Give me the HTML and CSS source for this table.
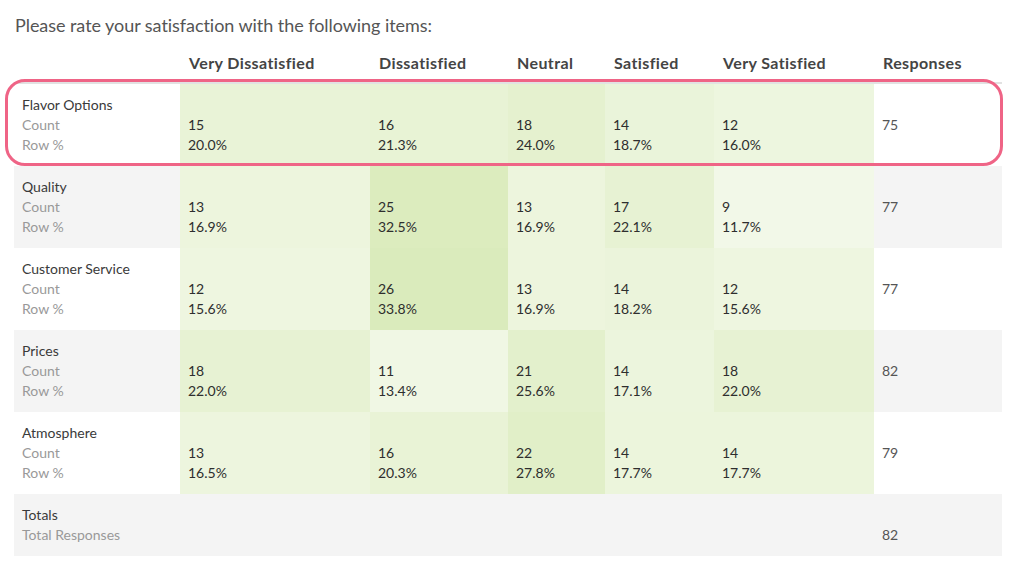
FILE: index.html
```html
<!DOCTYPE html>
<html lang="en">
<head>
<meta charset="utf-8">
<title>Satisfaction</title>
<link rel="stylesheet" href="styles.css">
</head>
<body>
<div class="page">
  <p class="question">Please rate your satisfaction with the following items:</p>
  <div class="table-wrap">
    <table class="grid">
      <colgroup>
        <col class="c-label"><col class="c-vd"><col class="c-d"><col class="c-n"><col class="c-s"><col class="c-vs"><col class="c-r">
      </colgroup>
      <thead>
        <tr>
          <th></th><th>Very Dissatisfied</th><th>Dissatisfied</th><th>Neutral</th><th>Satisfied</th><th>Very Satisfied</th><th>Responses</th>
        </tr>
      </thead>
      <tbody>
        <tr>
          <td class="label"><span class="name">Flavor Options</span><span class="sub">Count</span><span class="sub">Row %</span></td>
          <td class="val" style="--a:.200"><span>15</span><span>20.0%</span></td>
          <td class="val" style="--a:.213"><span>16</span><span>21.3%</span></td>
          <td class="val" style="--a:.240"><span>18</span><span>24.0%</span></td>
          <td class="val" style="--a:.187"><span>14</span><span>18.7%</span></td>
          <td class="val" style="--a:.160"><span>12</span><span>16.0%</span></td>
          <td class="resp">75</td>
        </tr>
        <tr class="alt">
          <td class="label"><span class="name">Quality</span><span class="sub">Count</span><span class="sub">Row %</span></td>
          <td class="val" style="--a:.169"><span>13</span><span>16.9%</span></td>
          <td class="val" style="--a:.325"><span>25</span><span>32.5%</span></td>
          <td class="val" style="--a:.169"><span>13</span><span>16.9%</span></td>
          <td class="val" style="--a:.221"><span>17</span><span>22.1%</span></td>
          <td class="val" style="--a:.117"><span>9</span><span>11.7%</span></td>
          <td class="resp">77</td>
        </tr>
        <tr>
          <td class="label"><span class="name">Customer Service</span><span class="sub">Count</span><span class="sub">Row %</span></td>
          <td class="val" style="--a:.156"><span>12</span><span>15.6%</span></td>
          <td class="val" style="--a:.338"><span>26</span><span>33.8%</span></td>
          <td class="val" style="--a:.169"><span>13</span><span>16.9%</span></td>
          <td class="val" style="--a:.182"><span>14</span><span>18.2%</span></td>
          <td class="val" style="--a:.156"><span>12</span><span>15.6%</span></td>
          <td class="resp">77</td>
        </tr>
        <tr class="alt">
          <td class="label"><span class="name">Prices</span><span class="sub">Count</span><span class="sub">Row %</span></td>
          <td class="val" style="--a:.220"><span>18</span><span>22.0%</span></td>
          <td class="val" style="--a:.134"><span>11</span><span>13.4%</span></td>
          <td class="val" style="--a:.256"><span>21</span><span>25.6%</span></td>
          <td class="val" style="--a:.171"><span>14</span><span>17.1%</span></td>
          <td class="val" style="--a:.220"><span>18</span><span>22.0%</span></td>
          <td class="resp">82</td>
        </tr>
        <tr>
          <td class="label"><span class="name">Atmosphere</span><span class="sub">Count</span><span class="sub">Row %</span></td>
          <td class="val" style="--a:.165"><span>13</span><span>16.5%</span></td>
          <td class="val" style="--a:.203"><span>16</span><span>20.3%</span></td>
          <td class="val" style="--a:.278"><span>22</span><span>27.8%</span></td>
          <td class="val" style="--a:.177"><span>14</span><span>17.7%</span></td>
          <td class="val" style="--a:.177"><span>14</span><span>17.7%</span></td>
          <td class="resp">79</td>
        </tr>
        <tr class="alt totals">
          <td class="label"><span class="name">Totals</span><span class="sub">Total Responses</span></td>
          <td></td><td></td><td></td><td></td><td></td>
          <td class="resp">82</td>
        </tr>
      </tbody>
    </table>
    <div class="highlight"></div>
  </div>
</div>
</body>
</html>
```
FILE: styles.css
```css
html, body {
  margin: 0;
  padding: 0;
  background: #fff;
}
body {
  font-family: Lato, "Open Sans", "Liberation Sans", sans-serif;
  color: #333;
}
.page {
  padding: 13px 15px 0 14px;
}
.question {
  margin: 0 0 7px 1px;
  font-size: 18px;
  line-height: 24px;
  color: #555;
  letter-spacing: -0.05px;
}
.table-wrap {
  position: relative;
  width: 988px;
}
.grid {
  width: 988px;
  border-collapse: collapse;
  table-layout: fixed;
  font-size: 14px;
  line-height: 20px;
}
.c-label { width: 166px; }
.c-vd { width: 190px; }
.c-d { width: 138px; }
.c-n { width: 97px; }
.c-s { width: 109px; }
.c-vs { width: 160px; }
.c-r { width: 128px; }

.grid th {
  text-align: left;
  font-size: 16px;
  font-weight: 700;
  line-height: 20px;
  letter-spacing: 0.4px;
  color: #444;
  padding: 9px 8px 9px 9px;
  border-bottom: 2px solid #e2e2e2;
}
.grid td {
  vertical-align: top;
  padding: 11px 8px;
  height: 60px;
}
.grid tr.alt td {
  background-color: #f4f4f4;
}
.grid tr.totals td {
  height: 40px;
}
.grid td span {
  display: block;
}
.label .name {
  color: #3a3a3a;
}
.label .sub {
  color: #999;
}
.grid td.val {
  padding-top: 31px;
  height: 40px;
  color: #2e2e2e;
  background-color: rgba(146, 196, 56, var(--a));
}
.grid tr.alt td.val {
  background-color: rgba(146, 196, 56, var(--a));
}
.grid td.resp {
  padding-top: 31px;
  height: 40px;
  color: #555;
}
.grid tr.totals td.resp {
  height: 20px;
}
.highlight {
  position: absolute;
  left: -9px;
  right: -1px;
  top: 35px;
  height: 87px;
  box-sizing: border-box;
  border: 3px solid #ef6486;
  border-radius: 20px;
  pointer-events: none;
}
```
